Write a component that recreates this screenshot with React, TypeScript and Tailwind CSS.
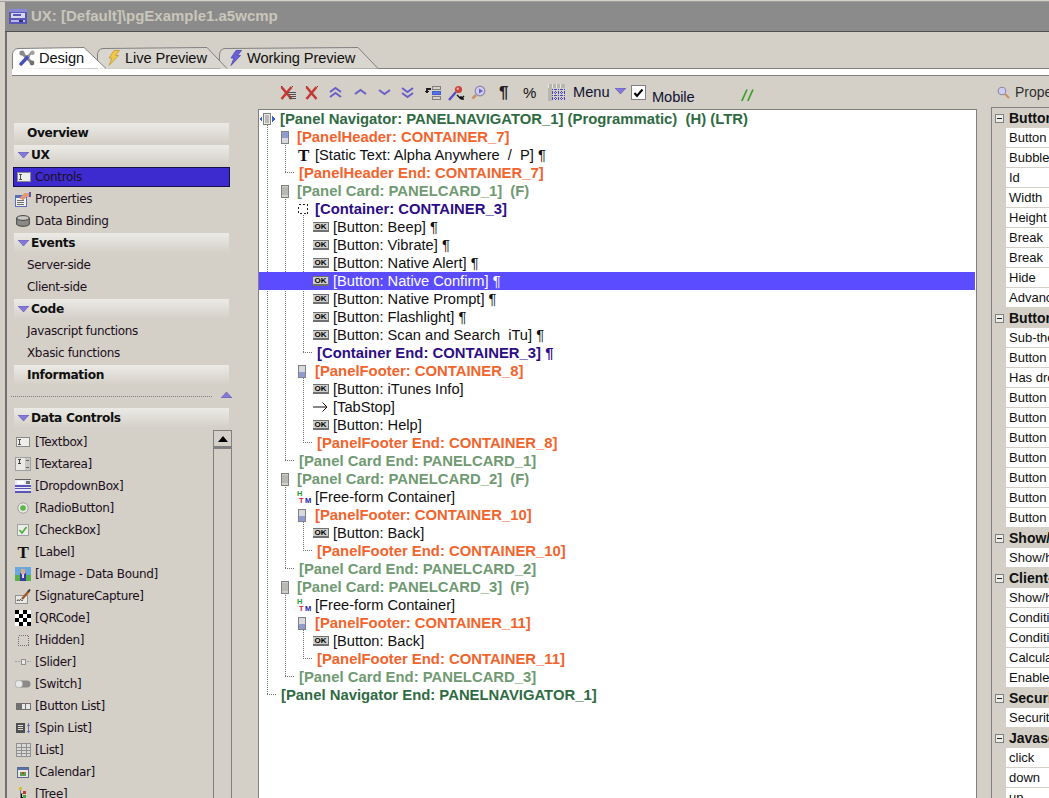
import React from "react";

const P = "#6a5fc8";

function Tri({ up = false, cls = "" }: { up?: boolean; cls?: string }) {
  return (
    <svg width="11" height="6" viewBox="0 0 11 6" className={`shrink-0 ${cls}`}>
      <polygon points={up ? "0,6 11,6 5.5,0" : "0,0 11,0 5.5,6"} fill="#8478d8" stroke="#5d52b0" strokeWidth="0.6" />
    </svg>
  );
}

function TitleIcon() {
  return (
    <svg width="18" height="15" viewBox="0 0 18 15" shapeRendering="crispEdges" className="shrink-0">
      <rect width="18" height="15" fill="#5b57b8" />
      <rect x="0" y="0" width="18" height="3" fill="#8a88d8" />
      <rect x="2" y="4" width="14" height="5" fill="#d8d8e8" />
      <rect x="4" y="5" width="8" height="2" fill="#5b57b8" />
      <rect x="2" y="11" width="14" height="2" fill="#b8b8e0" />
      <rect x="10" y="11" width="4" height="2" fill="#33307a" />
    </svg>
  );
}

function ToolsIcon() {
  return (
    <svg width="16" height="16" viewBox="0 0 16 16" className="shrink-0">
      <path d="M3 3 L13 13" stroke="#8a8a88" strokeWidth="3" strokeLinecap="round" />
      <path d="M2 14 L9 6.5" stroke="#4a4fb8" strokeWidth="3.4" strokeLinecap="round" />
      <path d="M9 6.5 L13 2" stroke="#9a9a98" strokeWidth="2.4" />
      <circle cx="3" cy="3" r="2.6" fill="#8a8a88" />
      <circle cx="13.5" cy="2.8" r="2.2" fill="#a0a09e" />
      <circle cx="13" cy="13" r="2.4" fill="#707070" />
    </svg>
  );
}

function Bolt({ fill, stroke }: { fill: string; stroke: string }) {
  return (
    <svg width="12" height="16" viewBox="0 0 12 16" className="shrink-0">
      <polygon points="6,0.5 11.5,0.5 7.5,5.5 10.5,5.5 1,15.5 4,8 1,8" fill={fill} stroke={stroke} strokeWidth="0.8" />
    </svg>
  );
}

function Tab({ z, w, path, fill, icon, label, m, pad, slot }: { z: string; w: string; path: string; fill: string; icon: React.ReactNode; label: string; m: string; pad: string; slot: string }) {
  return (
    <div className={`relative h-[22px] flex items-center ${z} ${w} ${m} ${pad}`}>
      <svg className="absolute inset-0" width="100%" height="22" viewBox="0 0 160 22" preserveAspectRatio="xMinYMin slice">
        <path d={path} fill={fill} stroke="#808080" />
      </svg>
      <span className={`relative flex items-center ${slot}`}>{icon}</span>
      <span className="relative text-[14.67px] tracking-[-0.1px] text-[#101010] whitespace-nowrap">{label}</span>
    </div>
  );
}

function XIcon({ list = false }: { list?: boolean }) {
  return (
    <svg width={list ? 16 : 14} height="14" viewBox={list ? "0 0 16 14" : "0 0 14 14"} className="shrink-0">
      <path d="M1.5 1 L11.5 13 M11.5 1 L1.5 13" stroke="#c23a36" strokeWidth="2.6" />
      <path d="M1 0.5 L2 0.5 M12 0.5 L13 0.5" stroke="#7a2a2a" strokeWidth="1" />
      {list && <path d="M8 6.5 H16 M9 8.5 H16 M9 10.5 H16 M9 12.5 H16" stroke="#505050" strokeWidth="1" />}
    </svg>
  );
}

function Chev({ dir, dbl = false }: { dir: "up" | "down"; dbl?: boolean }) {
  const d = (y: number) => (dir === "up" ? `M1 ${y + 4} L6.5 ${y} L12 ${y + 4}` : `M1 ${y} L6.5 ${y + 4} L12 ${y}`);
  return (
    <svg width="14" height="13" viewBox="0 0 14 13" fill="none" stroke={P} strokeWidth="2" className="shrink-0">
      {dbl ? (
        <>
          <path d={d(2)} />
          <path d={d(7)} />
        </>
      ) : (
        <path d={d(4)} />
      )}
    </svg>
  );
}

function MoveIcon() {
  return (
    <svg width="16" height="14" viewBox="0 0 16 14" shapeRendering="crispEdges" className="shrink-0">
      <rect x="7.5" y="0.5" width="8" height="3" fill="#d4d0c8" stroke="#808080" />
      <rect x="7.5" y="5.5" width="8" height="3" fill="#5a70e0" stroke="#4060d0" />
      <rect x="7.5" y="10.5" width="8" height="3" fill="#d4d0c8" stroke="#808080" />
      <path d="M6 2 H1 V5 H0 L2 8 L4 5 H3 V4 H6 Z" fill="#202020" />
    </svg>
  );
}

function PickIcon() {
  return (
    <svg width="17" height="16" viewBox="0 0 17 16" className="shrink-0">
      <path d="M1 15 L8 7" stroke="#5a4fc0" strokeWidth="2.4" />
      <circle cx="10.5" cy="4.5" r="3.6" fill="#c8443c" />
      <circle cx="9.8" cy="3.8" r="1.2" fill="#f0a8a0" />
      <path d="M9 8 L13 12 M13 12 L16 9 M13 12 L13 9 M13 12 L16 12" stroke="#101010" strokeWidth="1.4" fill="none" transform="translate(0 2)" />
    </svg>
  );
}

function FindIcon() {
  return (
    <svg width="15" height="15" viewBox="0 0 15 15" className="shrink-0">
      <path d="M1.5 13.5 L5 10" stroke="#c89068" strokeWidth="2.6" />
      <circle cx="9" cy="6" r="4.8" fill="#cfcdf0" stroke="#8a88a8" strokeWidth="1.2" />
      <polygon points="8,3.5 12,6 8,8.5" fill="#6a5fc8" />
    </svg>
  );
}

function GridIcon() {
  return (
    <svg width="17" height="17" viewBox="0 0 17 17" shapeRendering="crispEdges" className="shrink-0">
      <rect width="17" height="4" fill="#b8b6ae" />
      <rect y="0" width="4" height="17" fill="#b8b6ae" />
      <g stroke="#4a44c0" strokeDasharray="1 1">
        <path d="M4.5 5 V17 M7.5 5 V17 M10.5 5 V17 M13.5 5 V17 M16.5 5 V17" />
        <path d="M4 5.5 H17 M4 8.5 H17 M4 11.5 H17 M4 14.5 H17" />
      </g>
      <path d="M0.5 0 V4 M4.5 0 V4 M8.5 0 V4 M12.5 0 V4" stroke="#e8e6e0" />
    </svg>
  );
}

function Toolbar() {
  return (
    <div className="h-[33px] shrink-0 flex items-center pl-[22px]">
      <XIcon list />
      <span className="ml-[9px] flex"><XIcon /></span>
      <span className="ml-[10px] flex"><Chev dir="up" dbl /></span>
      <span className="ml-[11px] flex"><Chev dir="up" /></span>
      <span className="ml-[10px] flex"><Chev dir="down" /></span>
      <span className="ml-[9px] flex"><Chev dir="down" dbl /></span>
      <span className="ml-[10px] flex"><MoveIcon /></span>
      <span className="ml-[7px] flex"><PickIcon /></span>
      <span className="ml-[6px] flex"><FindIcon /></span>
      <span className="ml-[13px] w-[10px] text-[17px] font-bold leading-none text-[#202020]">¶</span>
      <span className="ml-[14px] w-[14px] text-[15px] leading-none text-[#101010]">%</span>
      <span className="ml-[11px] flex"><GridIcon /></span>
      <span className="ml-[8px] text-[14.67px] text-[#101030] -mt-[1px] w-[35px] whitespace-nowrap">Menu</span>
      <Tri cls="ml-[7px] -mt-[4px]" />
      <span className="ml-[5px] w-[15px] h-[15px] shrink-0 bg-white border border-[#808080] flex items-center justify-center">
        <svg width="11" height="10" viewBox="0 0 11 10"><path d="M1.5 5 L4 8 L9.5 1.5" fill="none" stroke="#000" strokeWidth="2" /></svg>
      </span>
      <span className="ml-[6px] mt-[8px] w-[41px] text-[14.67px] tracking-[-0.1px] text-[#101030] whitespace-nowrap">Mobile</span>
      <span className="ml-[48px] mt-[4px] flex">
        <svg width="13" height="12" viewBox="0 0 13 12"><path d="M0.8 12 L6 0.5 M6.8 12 L12 0.5" stroke="#3aa02a" strokeWidth="1.7" /></svg>
      </span>
    </div>
  );
}

/* ---------- Sidebar ---------- */

function TextboxIcon() {
  return (
    <svg width="14" height="10" viewBox="0 0 14 10" shapeRendering="crispEdges" className="shrink-0">
      <rect x="0.5" y="0.5" width="13" height="9" fill="#eeeeea" stroke="#8a8a8a" />
      <path d="M2 2.5 H5 M2 7.5 H5 M3.5 2.5 V7.5" stroke="#505050" />
    </svg>
  );
}
function TextareaIcon() {
  return (
    <svg width="16" height="14" viewBox="0 0 16 14" shapeRendering="crispEdges" className="shrink-0">
      <rect x="0.5" y="0.5" width="15" height="13" fill="#e8e8e4" stroke="#a0a0a0" />
      <rect x="10" y="1" width="5" height="12" fill="#c8c8c4" />
      <path d="M3 2.5 H6 M3 6.5 H6 M4.5 2.5 V6.5" stroke="#404040" />
      <path d="M11 3.5 H14 M11 10.5 H14" stroke="#606060" />
    </svg>
  );
}
function DropdownIcon() {
  return (
    <svg width="16" height="14" viewBox="0 0 16 14" shapeRendering="crispEdges" className="shrink-0">
      <rect width="16" height="14" fill="#e8e8f0" />
      <rect x="0" y="0" width="16" height="1" fill="#606060" />
      <rect x="2" y="2" width="7" height="3" fill="#fff" />
      <rect x="11" y="2" width="4" height="3" fill="#707070" />
      <rect x="0" y="6" width="16" height="2" fill="#5a55b8" />
      <rect x="0" y="9" width="16" height="1" fill="#5a55b8" />
      <rect x="0" y="12" width="16" height="2" fill="#5a55b8" />
    </svg>
  );
}
function RadioIcon() {
  return (
    <svg width="12" height="12" viewBox="0 0 12 12" className="shrink-0">
      <circle cx="6" cy="6" r="5.2" fill="#e8e8e4" stroke="#a0a0a0" />
      <circle cx="6" cy="6" r="2.8" fill="#58b848" />
    </svg>
  );
}
function CheckIcon() {
  return (
    <svg width="12" height="12" viewBox="0 0 12 12" className="shrink-0">
      <rect x="0.5" y="0.5" width="11" height="11" fill="#ecece8" stroke="#a0a0a0" />
      <path d="M2.5 6 L5 9 L9.5 3" fill="none" stroke="#48a838" strokeWidth="1.6" />
    </svg>
  );
}
function TIcon() {
  return <span className="w-[11px] shrink-0 text-[17px] font-bold leading-none text-[#101010] font-['Liberation_Serif',serif] text-center">T</span>;
}
function ImageIcon() {
  return (
    <svg width="16" height="14" viewBox="0 0 16 14" shapeRendering="crispEdges" className="shrink-0">
      <rect width="16" height="9" fill="#6aa8e0" />
      <rect y="8" width="16" height="6" fill="#58b048" />
      <rect x="5" y="6" width="6" height="8" fill="#3a3ca0" />
      <rect x="6" y="2" width="4" height="5" fill="#e0a888" />
      <rect x="7" y="7" width="2" height="4" fill="#d8d8f0" />
    </svg>
  );
}
function SignIcon() {
  return (
    <svg width="16" height="15" viewBox="0 0 16 15" className="shrink-0">
      <rect x="0.5" y="6.5" width="12" height="8" fill="#e8e8e4" stroke="#909090" />
      <path d="M2 12 C3 9 4 13 5 11 C6 9 6 13 8 11" fill="none" stroke="#303030" />
      <path d="M7 10 L14 2" stroke="#a05828" strokeWidth="2.4" />
      <path d="M13 3 L15 0.5" stroke="#404040" strokeWidth="2" />
    </svg>
  );
}
function QRIcon() {
  return (
    <svg width="16" height="16" viewBox="0 0 16 16" shapeRendering="crispEdges" className="shrink-0">
      <rect width="16" height="16" fill="#fff" />
      {Array.from({ length: 16 }).map((_, i) => {
        const x = i % 4;
        const y = Math.floor(i / 4);
        return (x + y) % 2 === 0 ? <rect key={i} x={x * 4} y={y * 4} width="4" height="4" fill="#000" /> : null;
      })}
    </svg>
  );
}
function HiddenIcon() {
  return (
    <svg width="11" height="11" viewBox="0 0 11 11" shapeRendering="crispEdges" className="shrink-0">
      <rect x="0.5" y="0.5" width="10" height="10" fill="none" stroke="#707070" strokeDasharray="1 1" />
    </svg>
  );
}
function SliderIcon() {
  return (
    <svg width="16" height="8" viewBox="0 0 16 8" shapeRendering="crispEdges" className="shrink-0">
      <path d="M0 3.5 H16" stroke="#a0a0a0" strokeDasharray="2 1" />
      <rect x="6" y="1" width="4" height="5" fill="#e8e8e8" stroke="#909090" />
    </svg>
  );
}
function SwitchIcon() {
  return (
    <svg width="16" height="8" viewBox="0 0 16 8" className="shrink-0">
      <rect x="0.5" y="0.5" width="15" height="7" rx="3.5" fill="#8a8a88" />
      <circle cx="4" cy="4" r="3.8" fill="#e8e8e8" stroke="#909090" strokeWidth="0.5" />
    </svg>
  );
}
function ButtonListIcon() {
  return (
    <svg width="15" height="7" viewBox="0 0 15 7" shapeRendering="crispEdges" className="shrink-0">
      <rect width="15" height="7" fill="#707070" />
      <rect x="6" y="1" width="3" height="5" fill="#e8e8e8" />
      <rect x="10" y="1" width="4" height="5" fill="#e8e8e8" />
    </svg>
  );
}
function SpinIcon() {
  return (
    <svg width="15" height="12" viewBox="0 0 15 12" shapeRendering="crispEdges" className="shrink-0">
      <rect x="0" y="1" width="9" height="10" fill="#505050" />
      <path d="M2 3.5 H7 M2 5.5 H7 M2 7.5 H7" stroke="#e0e0e0" />
      <path d="M12.5 1 V11" stroke="#6a70c8" />
      <path d="M11 3 H14 M11 9 H14" stroke="#6a70c8" />
    </svg>
  );
}
function ListIcon() {
  return (
    <svg width="15" height="14" viewBox="0 0 15 14" shapeRendering="crispEdges" className="shrink-0">
      <rect x="0.5" y="0.5" width="14" height="13" fill="#d8d8d4" stroke="#909090" />
      <path d="M5.5 1 V13 M10.5 1 V13 M1 4.5 H14 M1 7.5 H14 M1 10.5 H14" stroke="#909090" />
    </svg>
  );
}
function CalIcon() {
  return (
    <svg width="12" height="11" viewBox="0 0 12 11" shapeRendering="crispEdges" className="shrink-0">
      <rect x="0.5" y="0.5" width="11" height="10" fill="#e8e8e0" stroke="#5a6a90" />
      <rect x="1" y="1" width="10" height="2" fill="#5a70a8" />
      <rect x="3" y="5" width="6" height="4" fill="#58a050" />
      <rect x="5" y="5" width="2" height="2" fill="#c83a3a" />
    </svg>
  );
}
function TreeIcon() {
  return (
    <svg width="10" height="14" viewBox="0 0 10 14" shapeRendering="crispEdges" className="shrink-0">
      <rect x="1" y="0" width="3" height="3" fill="#d8c030" />
      <rect x="5" y="4" width="3" height="3" fill="#c83a3a" />
      <path d="M2.5 3 V12 H5 M2.5 6 H5" stroke="#808080" />
      <rect x="5" y="8" width="3" height="3" fill="#40a838" />
      <rect x="5" y="11" width="3" height="3" fill="#4038c0" />
    </svg>
  );
}
function PropsIcon() {
  return (
    <svg width="16" height="15" viewBox="0 0 16 15" shapeRendering="crispEdges" className="shrink-0">
      <rect x="0.5" y="3.5" width="11" height="11" fill="#f0f0f0" stroke="#5a70b8" />
      <rect x="0" y="3" width="11" height="3" fill="#5a70b8" />
      <path d="M2 8.5 H9 M2 10.5 H9 M2 12.5 H9" stroke="#707070" />
      <path d="M4 6 L10 1 H15 V5 H11 L8 8 Z" fill="#e09878" />
      <rect x="14" y="0" width="2" height="5" fill="#5a55b8" />
    </svg>
  );
}
function DbIcon() {
  return (
    <svg width="14" height="12" viewBox="0 0 14 12" className="shrink-0">
      <path d="M0.7 3 V9 C0.7 12 13.3 12 13.3 9 V3 Z" fill="#8a8a88" stroke="#404040" />
      <ellipse cx="7" cy="3" rx="6.3" ry="2.4" fill="#c8c8c4" stroke="#404040" />
    </svg>
  );
}

const F = "font-['DejaVu_Sans',sans-serif]";
const sideText = `text-[12px] tracking-[-0.35px] text-[#1b0f20] ${F}`;

function Head({ label, open = false }: { label: string; open?: boolean }) {
  return (
    <div className="h-[20px] mb-[2px] w-[215px] flex items-center bg-linear-to-b from-[#ebeae5] to-[#d4d0c8]">
      {open ? <Tri cls="ml-[4px] mr-[2px] -mt-[1px]" /> : <span className="w-[13px] shrink-0" />}
      <span className={`text-[12.2px] font-bold tracking-[-0.35px] text-[#101010] ${F}`}>{label}</span>
    </div>
  );
}

function Item({ icon, label }: { icon?: React.ReactNode; label: string }) {
  return (
    <div className="h-[22px] pb-[2px] flex items-center">
      {icon ? <span className="w-[21px] shrink-0 pl-[1px] flex items-center justify-center pr-[4px]">{icon}</span> : <span className="w-[13px] shrink-0" />}
      <span className={`${sideText} whitespace-nowrap`}>{label}</span>
    </div>
  );
}

function Sidebar() {
  const controls: [React.ReactNode, string][] = [
    [<TextboxIcon />, "[Textbox]"],
    [<TextareaIcon />, "[Textarea]"],
    [<DropdownIcon />, "[DropdownBox]"],
    [<RadioIcon />, "[RadioButton]"],
    [<CheckIcon />, "[CheckBox]"],
    [<TIcon />, "[Label]"],
    [<ImageIcon />, "[Image - Data Bound]"],
    [<SignIcon />, "[SignatureCapture]"],
    [<QRIcon />, "[QRCode]"],
    [<HiddenIcon />, "[Hidden]"],
    [<SliderIcon />, "[Slider]"],
    [<SwitchIcon />, "[Switch]"],
    [<ButtonListIcon />, "[Button List]"],
    [<SpinIcon />, "[Spin List]"],
    [<ListIcon />, "[List]"],
    [<CalIcon />, "[Calendar]"],
    [<TreeIcon />, "[Tree]"],
  ];
  return (
    <div className="w-[251px] shrink-0 pt-[47px] pl-[7px]">
      <Head label="Overview" />
      <Head label="UX" open />
      <div className="h-[20px] w-[217px] -ml-[1px] mb-[2px] flex items-center bg-[#3d2bd0] border border-[#14104a]">
        <span className="w-[21px] shrink-0 pl-[2px] flex justify-center pr-[4px]"><TextboxIcon /></span>
        <span className={sideText}>Controls</span>
      </div>
      <Item icon={<PropsIcon />} label="Properties" />
      <Item icon={<DbIcon />} label="Data Binding" />
      <Head label="Events" open />
      <Item label="Server-side" />
      <Item label="Client-side" />
      <Head label="Code" open />
      <Item label="Javascript functions" />
      <Item label="Xbasic functions" />
      <Head label="Information" />
      <div className="h-[18px] -ml-[3px] flex items-center">
        <div className="w-[201px] border-t border-dotted border-[#808080]" />
        <Tri up cls="ml-[9px] -mt-[2px]" />
      </div>
      <div className="mt-[3px]">
        <Head label="Data Controls" open />
      </div>
      <div className="flex">
        <div className="w-[199px] pt-[2px]">
          {controls.map(([ic, l]) => (
            <Item key={l} icon={ic} label={l} />
          ))}
        </div>
        <div className="w-[19px] h-[400px] border-x border-[#808080] bg-[#d4d0c8]">
          <div className="h-[19px] border-t border-[#808080] border-b-[3px] border-b-[#808080] flex items-center justify-center">
            <svg width="10" height="6" viewBox="0 0 10 6"><polygon points="0,6 10,6 5,0" fill="#000" /></svg>
          </div>
        </div>
      </div>
    </div>
  );
}

/* ---------- Tree ---------- */

function Panel({ kind }: { kind: "head" | "foot" | "card" }) {
  return (
    <svg width="8" height="13" viewBox="0 0 8 13" shapeRendering="crispEdges" className="shrink-0">
      <rect x="0.5" y="0.5" width="7" height="12" fill="#d0d0cc" stroke="#808080" />
      {kind === "head" && <rect x="1" y="1" width="6" height="6" fill="#8f9cd0" />}
      {kind === "foot" && <rect x="1" y="7" width="6" height="5" fill="#8f9cd0" />}
      {kind === "head" && <rect x="1" y="7" width="6" height="5" fill="#d8d8e0" />}
      {kind === "foot" && <rect x="1" y="1" width="6" height="6" fill="#d8d8e0" />}
      {kind === "card" && <rect x="1" y="2" width="6" height="8" fill="#b8b8b4" />}
    </svg>
  );
}

function NavIcon() {
  return (
    <svg width="16" height="12" viewBox="0 0 16 12" shapeRendering="crispEdges" className="shrink-0">
      <polygon points="0,6 3,3 3,9" fill="#3a60d8" />
      <polygon points="16,6 13,3 13,9" fill="#3a60d8" />
      <rect x="4.5" y="0.5" width="7" height="11" fill="#e8e8e4" stroke="#808080" />
      <rect x="6" y="2" width="4" height="8" fill="#b8b8b4" />
    </svg>
  );
}

function OkIcon() {
  return (
    <span className="w-[16px] h-[10px] shrink-0 bg-[#d0d0cc] border-b-2 border-r border-t border-[#707070] flex items-center justify-center text-[8px] font-bold leading-none text-black font-['Liberation_Sans',sans-serif]">
      OK
    </span>
  );
}

function ContainerIcon() {
  return (
    <svg width="10" height="10" viewBox="0 0 10 10" shapeRendering="crispEdges" className="shrink-0">
      <rect x="0.5" y="0.5" width="9" height="9" fill="none" stroke="#202020" strokeDasharray="2 2" />
    </svg>
  );
}

function HtmIcon() {
  return (
    <svg width="15" height="14" viewBox="0 0 15 14" fontFamily="'Liberation Sans',sans-serif" fontWeight="bold" fontSize="7.5" className="shrink-0">
      <text x="0" y="6" fill="#2a9a2a">H</text>
      <text x="2" y="13" fill="#d02020">T</text>
      <text x="8" y="13" fill="#2020b0">M</text>
    </svg>
  );
}

function ArrowIcon() {
  return (
    <svg width="15" height="10" viewBox="0 0 15 10" fill="none" stroke="#101010" className="shrink-0">
      <path d="M0 5 H14 M9.5 0.5 L14 5 L9.5 9.5" />
    </svg>
  );
}

const NAVC = "text-[#2f6b42] text-[14.85px] font-bold";
const ORG = "text-[#f2642c] text-[14.85px] font-bold";
const CARD = "text-[#6f9a72] text-[14.85px] font-bold";
const CONT = "text-[#2c0d85] text-[14.85px] font-bold";
const BLK = "text-[#101010]";

type Row = { pad: string; slot?: string; icon?: React.ReactNode; text: string; color: string; sel?: boolean };

const L3 = { pad: "pl-[54px]", slot: "w-[20px]" };
const L2 = { pad: "pl-[39px]", slot: "w-[17px]" };
const L1 = { pad: "pl-[22px]", slot: "w-[16px]" };
const btn = (t: string, sel = false): Row => ({ ...L3, icon: <OkIcon />, text: t, color: BLK, sel });

const rows: Row[] = [
  { pad: "pl-0", slot: "w-[21px]", icon: <NavIcon />, text: "[Panel Navigator: PANELNAVIGATOR_1] (Programmatic)  (H) (LTR)", color: NAVC },
  { ...L1, icon: <Panel kind="head" />, text: "[PanelHeader: CONTAINER_7]", color: ORG },
  { ...L2, icon: <TIcon />, text: "[Static Text: Alpha Anywhere  /  P] ¶", color: BLK },
  { pad: "pl-[40px]", text: "[PanelHeader End: CONTAINER_7]", color: ORG },
  { ...L1, icon: <Panel kind="card" />, text: "[Panel Card: PANELCARD_1]  (F)", color: CARD },
  { ...L2, icon: <ContainerIcon />, text: "[Container: CONTAINER_3]", color: CONT },
  btn("[Button: Beep] ¶"),
  btn("[Button: Vibrate] ¶"),
  btn("[Button: Native Alert] ¶"),
  btn("[Button: Native Confirm] ¶", true),
  btn("[Button: Native Prompt] ¶"),
  btn("[Button: Flashlight] ¶"),
  btn("[Button: Scan and Search  iTu] ¶"),
  { pad: "pl-[58px]", text: "[Container End: CONTAINER_3] ¶", color: CONT },
  { ...L2, icon: <Panel kind="foot" />, text: "[PanelFooter: CONTAINER_8]", color: ORG },
  btn("[Button: iTunes Info]"),
  { ...L3, icon: <ArrowIcon />, text: "[TabStop]", color: BLK },
  btn("[Button: Help]"),
  { pad: "pl-[58px]", text: "[PanelFooter End: CONTAINER_8]", color: ORG },
  { pad: "pl-[40px]", text: "[Panel Card End: PANELCARD_1]", color: CARD },
  { ...L1, icon: <Panel kind="card" />, text: "[Panel Card: PANELCARD_2]  (F)", color: CARD },
  { pad: "pl-[38px]", slot: "w-[18px]", icon: <HtmIcon />, text: "[Free-form Container]", color: BLK },
  { ...L2, icon: <Panel kind="foot" />, text: "[PanelFooter: CONTAINER_10]", color: ORG },
  btn("[Button: Back]"),
  { pad: "pl-[58px]", text: "[PanelFooter End: CONTAINER_10]", color: ORG },
  { pad: "pl-[40px]", text: "[Panel Card End: PANELCARD_2]", color: CARD },
  { ...L1, icon: <Panel kind="card" />, text: "[Panel Card: PANELCARD_3]  (F)", color: CARD },
  { pad: "pl-[38px]", slot: "w-[18px]", icon: <HtmIcon />, text: "[Free-form Container]", color: BLK },
  { ...L2, icon: <Panel kind="foot" />, text: "[PanelFooter: CONTAINER_11]", color: ORG },
  btn("[Button: Back]"),
  { pad: "pl-[58px]", text: "[PanelFooter End: CONTAINER_11]", color: ORG },
  { pad: "pl-[40px]", text: "[Panel Card End: PANELCARD_3]", color: CARD },
  { pad: "pl-[22px]", text: "[Panel Navigator End: PANELNAVIGATOR_1]", color: NAVC },
];

function Guides() {
  const v: [number, number, number][] = [
    [8, 15, 585],
    [26, 35, 62],
    [26, 87, 350],
    [44, 105, 242],
    [44, 268, 332],
    [26, 377, 458],
    [44, 412, 440],
    [26, 485, 566],
    [44, 520, 548],
  ];
  const h: [number, number][] = [
    [8, 584],
    [26, 62],
    [26, 350],
    [44, 242],
    [44, 332],
    [26, 458],
    [44, 440],
    [26, 566],
    [44, 548],
  ];
  return (
    <svg className="absolute left-0 top-0 pointer-events-none" width="60" height="600" shapeRendering="crispEdges" stroke="#707070" strokeDasharray="1 1">
      {v.map(([x, a, b], i) => (
        <line key={i} x1={x + 0.5} x2={x + 0.5} y1={a} y2={b} />
      ))}
      {h.map(([x, y], i) => (
        <line key={i} x1={x} x2={x + 9} y1={y + 0.5} y2={y + 0.5} />
      ))}
    </svg>
  );
}

function Tree() {
  return (
    <div className="relative h-[720px] shrink-0 bg-white border border-[#808080] overflow-hidden">
      <Guides />
      <div className="relative pr-[1px]">
        {rows.map((r, i) => (
          <div key={i} className={`h-[18px] flex items-center whitespace-pre text-[14.67px] ${r.pad} ${r.sel ? "bg-[#5b4cff]" : ""}`}>
            {r.slot && <span className={`${r.slot} flex items-center shrink-0`}>{r.icon}</span>}
            <span className={r.sel ? "text-white" : r.color}>{r.text}</span>
          </div>
        ))}
      </div>
    </div>
  );
}

/* ---------- Properties ---------- */

const props: [string, boolean][] = [
  ["Button Properties", true], ["Button text", false], ["Bubble help", false], ["Id", false], ["Width", false], ["Height", false], ["Break", false], ["Break", false], ["Hide", false], ["Advanced", false],
  ["Button Appearance", true], ["Sub-theme", false], ["Button icon", false], ["Has dropdown", false], ["Button image", false], ["Button style", false], ["Button size", false], ["Button color", false], ["Button width", false], ["Button height", false], ["Button type", false],
  ["Show/Hide", true], ["Show/hide", false],
  ["Client-side", true], ["Show/hide", false], ["Condition", false], ["Condition", false], ["Calculate", false], ["Enable", false],
  ["Security", true], ["Security", false],
  ["Javascript", true], ["click", false], ["down", false], ["up", false],
];

function Minus() {
  return (
    <svg width="9" height="9" viewBox="0 0 9 9" shapeRendering="crispEdges" className="ml-[3px] mr-[2px] shrink-0">
      <rect x="0.5" y="0.5" width="8" height="8" fill="#ecece8" stroke="#808080" />
      <path d="M2 4.5 H7" stroke="#202020" />
    </svg>
  );
}

function Props() {
  return (
    <div className="flex-1 min-w-0 ml-[14px] overflow-hidden">
      <div className="h-[31px] flex items-center pl-[6px] pt-[1px]">
        <svg width="13" height="13" viewBox="0 0 13 13" className="shrink-0">
          <path d="M8 8 L12 12" stroke="#c89068" strokeWidth="2.2" />
          <circle cx="5" cy="5" r="3.8" fill="#cfcdf0" stroke="#8a88a8" strokeWidth="1.1" />
        </svg>
        <span className="ml-[5px] text-[14px] text-[#303030] whitespace-nowrap">Properties</span>
      </div>
      <div className="border-l border-[#808080] border-t h-[720px] overflow-hidden">
        {props.map(([t, b], i) =>
          b ? (
            <div key={i} className="h-[20px] flex items-center whitespace-nowrap">
              <Minus />
              <span className="ml-[3px] text-[14px] font-bold text-[#101010]">{t}</span>
            </div>
          ) : (
            <div key={i} className="h-[20px] ml-[14px] pl-[3px] bg-white border-b border-[#d4d0c8] flex items-center whitespace-nowrap text-[13px] text-[#101010]">
              {t}
            </div>
          )
        )}
      </div>
    </div>
  );
}

export default function App() {
  return (
    <div className="w-[1049px] h-[798px] overflow-hidden bg-[#d4d0c8] flex flex-col font-['Liberation_Sans',Arial,sans-serif]">
      <div className="h-[2px] shrink-0 border-b border-[#a0a0a0]" />
      <div className="h-[30px] shrink-0 ml-[5px] bg-[#8b8b8b] flex items-center pl-[4px] border-b border-[#505050]">
        <TitleIcon />
        <span className="ml-[4px] text-[15px] font-bold text-[#c9c6ba] whitespace-nowrap">UX: [Default]\pgExample1.a5wcmp</span>
      </div>
      <div className="flex-1 min-h-0 ml-[5px] border-l-2 border-[#6f6f6f] flex flex-col">
        <div className="mt-[15px] pl-[5px] flex -mb-[1px] shrink-0">
          <Tab z="z-30" w="w-[96px]" m="" pad="pl-[7px]" slot="w-[20px]" fill="#ffffff"
            path="M0.5 22 V8 Q0.5 2 6 1.5 L72 0.5 L94 21.5"
            icon={<ToolsIcon />} label="Design" />
          <Tab z="z-20" w="w-[131px]" m="-ml-[11px]" pad="pl-[11px]" slot="w-[17px]" fill="#d8d6ce"
            path="M0.5 22 V8 Q0.5 2 6 1.5 L110 0.5 L130 21.5"
            icon={<Bolt fill="#f0c848" stroke="#c89830" />} label="Live Preview" />
          <Tab z="z-10" w="w-[160px]" m="-ml-[9px]" pad="pl-[11px]" slot="w-[17px]" fill="#d8d6ce"
            path="M0.5 22 V8 Q0.5 2 6 1.5 L139 0.5 L159 21.5"
            icon={<Bolt fill="#6a60d8" stroke="#4a42b0" />} label="Working Preview" />
        </div>
        <div className="h-[8px] ml-[5px] shrink-0 bg-white border-y border-[#808080]" />
        <div className="flex flex-1 min-h-0">
          <Sidebar />
          <div className="w-[719px] shrink-0 flex flex-col">
            <Toolbar />
            <Tree />
          </div>
          <Props />
        </div>
      </div>
    </div>
  );
}
